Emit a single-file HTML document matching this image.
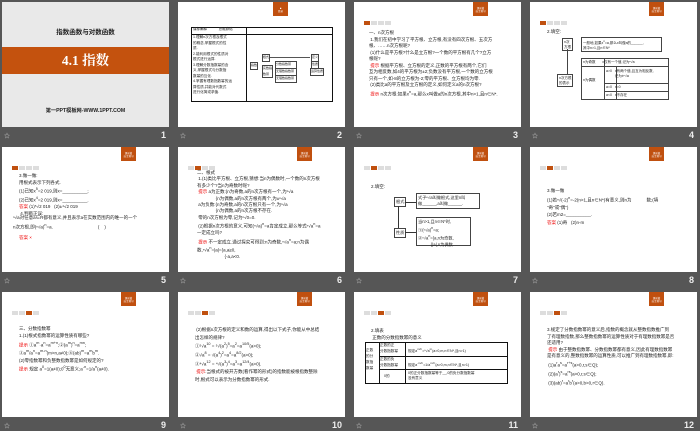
<!DOCTYPE html>
<html><head><meta charset="utf-8"><style>
*{margin:0;padding:0;box-sizing:border-box}
body{width:700px;height:431px;background:#565656;position:relative;overflow:hidden;font-family:"Liberation Sans","Noto Sans CJK SC",sans-serif;color:#222}
.s{position:absolute;width:167px;height:125px;background:#fff;overflow:hidden}
.n{position:absolute;color:#eee;font-size:9px;font-weight:bold;width:167px}
.n b{position:absolute;right:3px;top:0}
.n i{position:absolute;left:2px;top:1px;font-style:normal;font-size:6px;color:#ccc}
.bd{position:absolute;left:119px;top:0;width:15px;height:14px;background:#c0500f;color:#fff;font-size:2.5px;text-align:center;padding-top:5px;line-height:3px}
.tb{position:absolute;left:10px;top:19px;height:4px;display:flex;gap:1px}
.tb span{width:6px;height:4px;background:#ddd}
.tb span.a{background:#c0500f}
.t{position:absolute;font-size:4.5px;line-height:6.5px;white-space:pre;color:#222}
.r{color:#e00}
.box{position:absolute;border:1px solid #444;font-size:4px;line-height:5.5px;padding:1px;white-space:pre}
</style></head><body>

<!-- 1 -->
<div class="s" style="left:2px;top:2px;background:#e9e9e9">
 <div style="position:absolute;top:24px;width:100%;text-align:center;font-size:6.5px;font-weight:bold">指数函数与对数函数</div>
 <div style="position:absolute;top:45px;height:27px;width:100%;background:#c4520e;color:#fff;text-align:center;font-size:13.5px;font-weight:bold;line-height:27px;font-family:'Liberation Serif','Noto Serif CJK SC',serif">4.1  指数</div>
 <div style="position:absolute;top:105px;width:100%;text-align:center;font-size:5.2px;font-weight:bold">第一PPT模板网-WWW.1PPT.COM</div>
</div>
<div class="n" style="left:2px;top:130px"><i>☆</i><b>1</b></div>

<!-- 2 -->
<div class="s" style="left:178px;top:2px">
 <div class="bd" style="left:95px">■<br>目录</div>
 <div style="position:absolute;left:13px;top:25px;width:142px;height:75px;border:1px solid #111"></div>
 <div style="position:absolute;left:68px;top:25px;width:1px;height:75px;background:#111"></div>
 <div style="position:absolute;left:13px;top:32px;width:142px;height:1px;background:#111"></div>
 <div class="t" style="left:15px;top:25px;font-size:3.5px;line-height:5.5px">课标阐释            思维脉络</div>
 <div class="t" style="left:15px;top:33px;font-size:3.6px;line-height:5.5px">1.理解n次方根及根式
的概念,掌握根式的性
质.
2.能利用根式的性质对
根式进行运算.
3.理解分数指数幂的含
义,掌握根式与分数指
数幂的互化.
4.掌握有理数指数幂的运
算性质,并能对代数式
进行化简或求值.</div>
 <div class="box" style="left:72px;top:60px;font-size:3px;padding:0">指数</div>
 <div class="box" style="left:84px;top:52px;font-size:3px;padding:0">根式</div>
 <div class="box" style="left:84px;top:63px;font-size:3px;padding:0">实数指<br>数幂</div>
 <div class="box" style="left:97px;top:59px;font-size:3px;padding:0;width:22px">分数指数幂</div>
 <div class="box" style="left:97px;top:66px;font-size:3px;padding:0;width:22px">无理数指数幂</div>
 <div class="box" style="left:97px;top:73px;font-size:3px;padding:0;width:22px">无理数指数幂</div>
 <div class="box" style="left:133px;top:52px;font-size:3px;padding:0">定义</div>
 <div class="box" style="left:133px;top:59px;font-size:3px;padding:0">性质</div>
 <div class="box" style="left:132px;top:66px;font-size:3px;padding:0">运算性质</div>
 <div style="position:absolute;left:92px;top:55px;width:40px;height:1px;background:#555"></div>
</div>
<div class="n" style="left:178px;top:130px"><i>☆</i><b>2</b></div>

<!-- 3 -->
<div class="s" style="left:354px;top:2px">
 <div class="bd">课前篇<br>自主预习</div>
 <div class="tb"><span class="a"></span><span></span><span></span><span></span></div>
 <div class="t" style="left:15px;top:28px">一、n次方根
 1.我们在初中学习了平方根、立方根,有没有四次方根、五次方
根、……n次方根呢?
 (1)什么是平方根?什么是立方根?一个数的平方根有几个?立方
根呢?
 <span class="r">提示</span> 根据平方根、立方根的定义,正数的平方根有两个,它们
互为相反数,如4的平方根为±2;负数没有平方根,一个数的立方根
只有一个,如-8的立方根为-2;零的平方根、立方根均为零.
 (2)类比a的平方根及立方根的定义,如何定义a的n次方根?
 <span class="r">提示</span> n次方根:如果x<sup>n</sup>=a,那么x叫做a的n次方根,其中n>1,且n∈N*.</div>
</div>
<div class="n" style="left:354px;top:130px"><i>☆</i><b>3</b></div>

<!-- 4 -->
<div class="s" style="left:530px;top:2px">
 <div class="bd">课前篇<br>自主预习</div>
 <div class="tb"><span class="a"></span><span></span><span></span><span></span></div>
 <div class="t" style="left:17px;top:27px">2.填空:</div>
 <div class="box" style="left:32px;top:36px;font-size:3.5px;line-height:4.5px">n次<br>方根</div>
 <div class="box" style="left:51px;top:35px;width:81px;height:15px;font-size:3.5px;line-height:5px">一般地,如果x<sup>n</sup>=a,那么x叫做a的______,
其中n>1,且n∈N*</div>
 <div style="position:absolute;left:37px;top:47px;width:1px;height:25px;background:#444"></div>
 <div class="box" style="left:27px;top:72px;font-size:3.5px;line-height:4.5px">n次方根<br>的表示</div>
 <div style="position:absolute;left:51px;top:56px;width:88px;height:42px;border:1px solid #444"></div>
 <div style="position:absolute;left:51px;top:64px;width:88px;height:1px;background:#444"></div>
 <div style="position:absolute;left:74px;top:56px;width:1px;height:42px;background:#444"></div>
 <div style="position:absolute;left:86px;top:64px;width:1px;height:34px;background:#444"></div>
 <div style="position:absolute;left:74px;top:81px;width:65px;height:1px;background:#444"></div>
 <div style="position:absolute;left:74px;top:89px;width:65px;height:1px;background:#444"></div>
 <div class="t" style="left:53px;top:57px;font-size:3.5px">n为奇数       x仅有一个值,记为ⁿ√a</div>
 <div class="t" style="left:53px;top:75px;font-size:3.5px">n为偶数</div>
 <div class="t" style="left:76px;top:67px;font-size:3.5px;line-height:5px">a>0   x有两个值,且互为相反数,
         记为±ⁿ√a</div>
 <div class="t" style="left:76px;top:82px;font-size:3.5px">a=0   x=0</div>
 <div class="t" style="left:76px;top:90px;font-size:3.5px">a<0   x不存在</div>
</div>
<div class="n" style="left:530px;top:130px"><i>☆</i><b>4</b></div>

<!-- 5 -->
<div class="s" style="left:2px;top:147px">
 <div class="bd">课前篇<br>自主预习</div>
 <div class="tb"><span class="a"></span><span></span><span></span><span></span></div>
 <div class="t" style="left:17px;top:26px">3.做一做:
用根式表示下列各式.
(1)已知x<sup>5</sup>=2 019,则x=__________;
(2)已知x<sup>4</sup>=2 019,则x=__________.
<span class="r">答案</span> (1)⁵√2 019   (2)±⁴√2 019
 4.判断正误:</div>
 <div class="t" style="left:11px;top:68px">ⁿ√a对任意a∈R都有意义,并且表示a在实数范围内的唯一的一个
n次方根,即(ⁿ√a)<sup>n</sup>=a.                                    (    )</div>
 <div class="t r" style="left:17px;top:88px">答案 ×</div>
</div>
<div class="n" style="left:2px;top:275px"><i>☆</i><b>5</b></div>

<!-- 6 -->
<div class="s" style="left:178px;top:147px">
 <div class="bd">课前篇<br>自主预习</div>
 <div class="tb"><span></span><span class="a"></span><span></span><span></span></div>
 <div class="t" style="left:19px;top:23px;line-height:6.4px">二、根式
 1.(1)类比平方根、立方根,猜想:当n为偶数时,一个数的n次方根
有多少个?当n为奇数时呢?
 <span class="r">提示</span> a为正数:{n为奇数,a的n次方根有一个,为ⁿ√a
               {n为偶数,a的n次方根有两个,为±ⁿ√a
 a为负数:{n为奇数,a的n次方根只有一个,为ⁿ√a
               {n为偶数,a的n次方根不存在.
 零的n次方根为零,记为ⁿ√0=0.
 (2)根据n次方根的意义,可知(ⁿ√a)<sup>n</sup>=a肯定成立,那么等式ⁿ√a<sup>n</sup>=a
一定成立吗?
 <span class="r">提示</span> 不一定成立.通过探究可得到:n为奇数,ⁿ√a<sup>n</sup>=a;n为偶
数,ⁿ√a<sup>n</sup>=|a|={a,a≥0,
                      {-a,a<0.</div>
</div>
<div class="n" style="left:178px;top:275px"><i>☆</i><b>6</b></div>

<!-- 7 -->
<div class="s" style="left:354px;top:147px">
 <div class="bd">课前篇<br>自主预习</div>
 <div class="tb"><span></span><span class="a"></span><span></span><span></span></div>
 <div class="t" style="left:17px;top:37px">2.填空:</div>
 <div class="box" style="left:40px;top:50px;font-size:4.2px">根式</div>
 <div style="position:absolute;left:51px;top:55px;width:11px;height:1px;background:#333"></div>
 <div class="box" style="left:62px;top:46px;width:64px;height:16px;font-size:4.2px;line-height:6px">式子ⁿ√a叫做根式,这里n叫
做______,a叫做______.</div>
 <div style="position:absolute;left:44px;top:59px;width:1px;height:22px;background:#333"></div>
 <div class="box" style="left:40px;top:81px;font-size:4.2px">性质</div>
 <div style="position:absolute;left:51px;top:85px;width:11px;height:1px;background:#333"></div>
 <div class="box" style="left:62px;top:70px;width:55px;height:29px;font-size:4.2px;line-height:6px">当n>1,且n∈N*时,
①(ⁿ√a)<sup>n</sup>=a;
②ⁿ√a<sup>n</sup>={a,n为奇数,
           {|a|,n为偶数.</div>
</div>
<div class="n" style="left:354px;top:275px"><i>☆</i><b>7</b></div>

<!-- 8 -->
<div class="s" style="left:530px;top:147px">
 <div class="bd">课前篇<br>自主预习</div>
 <div class="tb"><span></span><span class="a"></span><span></span><span></span></div>
 <div class="t" style="left:17px;top:40px;line-height:7.5px">3.做一做
(1)若ⁿ√(-2)<sup>n</sup>=-2(n>1,且n∈N*)有意义,则n为            数;(填
"奇"或"偶")
(2)若m<n,则√(m-n)<sup>2</sup>=__________.
<span class="r">答案</span> (1)奇   (2)n-m</div>
</div>
<div class="n" style="left:530px;top:275px"><i>☆</i><b>8</b></div>

<!-- 9 -->
<div class="s" style="left:2px;top:292px">
 <div class="bd">课前篇<br>自主预习</div>
 <div class="tb"><span></span><span></span><span class="a"></span><span></span></div>
 <div class="t" style="left:17px;top:33px;line-height:7.3px">三、分数指数幂
1.(1)根式指数幂的运算性质有哪些?
<span class="r">提示</span> ①a<sup>m</sup>·a<sup>n</sup>=a<sup>m+n</sup>;②(a<sup>m</sup>)<sup>n</sup>=a<sup>mn</sup>;
③a<sup>m</sup>/a<sup>n</sup>=a<sup>m-n</sup>(m>n,a≠0);④(ab)<sup>m</sup>=a<sup>m</sup>b<sup>m</sup>.
(2)零指数幂和负整数指数幂是如何规定的?
<span class="r">提示</span> 规定 a<sup>0</sup>=1(a≠0);0<sup>0</sup>无意义;a<sup>-n</sup>=1/a<sup>n</sup>(a≠0).</div>
</div>
<div class="n" style="left:2px;top:420px"><i>☆</i><b>9</b></div>

<!-- 10 -->
<div class="s" style="left:178px;top:292px">
 <div class="bd">课前篇<br>自主预习</div>
 <div class="tb"><span></span><span></span><span class="a"></span><span></span></div>
 <div class="t" style="left:17px;top:34px;line-height:7.5px"> (2)根据n次方根的定义和数的运算,得出以下式子,你能从中总结
出怎样的规律?
①⁵√a<sup>10</sup> = ⁵√(a<sup>2</sup>)<sup>5</sup>=a<sup>2</sup>=a<sup>10/5</sup>(a>0);
②√a<sup>8</sup> = √(a<sup>4</sup>)<sup>2</sup>=a<sup>4</sup>=a<sup>8/2</sup>(a>0);
③⁴√a<sup>12</sup> = ⁴√(a<sup>3</sup>)<sup>4</sup>=a<sup>3</sup>=a<sup>12/4</sup>(a>0).
 <span class="r">提示</span>:当根式的被开方数(看作幂的形式)的指数能被根指数整除
时,根式可以表示为分数指数幂的形式.</div>
</div>
<div class="n" style="left:178px;top:420px"><i>☆</i><b>10</b></div>

<!-- 11 -->
<div class="s" style="left:354px;top:292px">
 <div class="bd">课前篇<br>自主预习</div>
 <div class="tb"><span></span><span></span><span class="a"></span><span></span></div>
 <div class="t" style="left:17px;top:36px">2.填表
 正数的分数指数幂的意义</div>
 <div style="position:absolute;left:11px;top:50px;width:143px;height:42px;border:1.5px solid #111"></div>
 <div style="position:absolute;left:25px;top:64px;width:129px;height:1px;background:#111"></div>
 <div style="position:absolute;left:25px;top:77px;width:129px;height:1px;background:#111"></div>
 <div style="position:absolute;left:25px;top:50px;width:1px;height:42px;background:#111"></div>
 <div style="position:absolute;left:51px;top:50px;width:1px;height:42px;background:#111"></div>
 <div class="t" style="left:12px;top:55px;font-size:3.6px;line-height:6px">正数
的分
数指
数幂</div>
 <div class="t" style="left:26px;top:51px;font-size:3.6px;line-height:5.5px">正数的正
分数指数幂</div>
 <div class="t" style="left:26px;top:65px;font-size:3.6px;line-height:5.5px">正数的负
分数指数幂</div>
 <div class="t" style="left:30px;top:81px;font-size:3.6px">0的</div>
 <div class="t" style="left:54px;top:54px;font-size:3.6px">规定a<sup>m/n</sup>=ⁿ√a<sup>m</sup>(a>0,m,n∈N*,且n>1)</div>
 <div class="t" style="left:54px;top:68px;font-size:3.6px">规定a<sup>-m/n</sup>=1/a<sup>m/n</sup>(a>0,m,n∈N*,且n>1)</div>
 <div class="t" style="left:54px;top:79px;font-size:3.6px;line-height:5px">0的正分数指数幂等于__,0的负分数指数幂
没有意义</div>
</div>
<div class="n" style="left:354px;top:420px"><i>☆</i><b>11</b></div>

<!-- 12 -->
<div class="s" style="left:530px;top:292px">
 <div class="bd">课前篇<br>自主预习</div>
 <div class="tb"><span></span><span></span><span class="a"></span><span></span></div>
 <div class="t" style="left:17px;top:35px">3.规定了分数指数幂的意义后,指数的概念就从整数指数推广到
了有理数指数,那么整数指数幂的运算性质对于有理数指数幂是否
还适用?
 <span class="r">提示</span> 由于整数指数幂、分数指数幂都有意义,因此有理数指数幂
是有意义的,整数指数幂的运算性质,可以推广到有理数指数幂,即:
 (1)a<sup>r</sup>a<sup>s</sup>=a<sup>r+s</sup>(a>0,r,s∈Q);
 (2)(a<sup>r</sup>)<sup>s</sup>=a<sup>rs</sup>(a>0,r,s∈Q);
 (3)(ab)<sup>r</sup>=a<sup>r</sup>b<sup>r</sup>(a>0,b>0,r∈Q).</div>
</div>
<div class="n" style="left:530px;top:420px"><i>☆</i><b>12</b></div>

</body></html>
